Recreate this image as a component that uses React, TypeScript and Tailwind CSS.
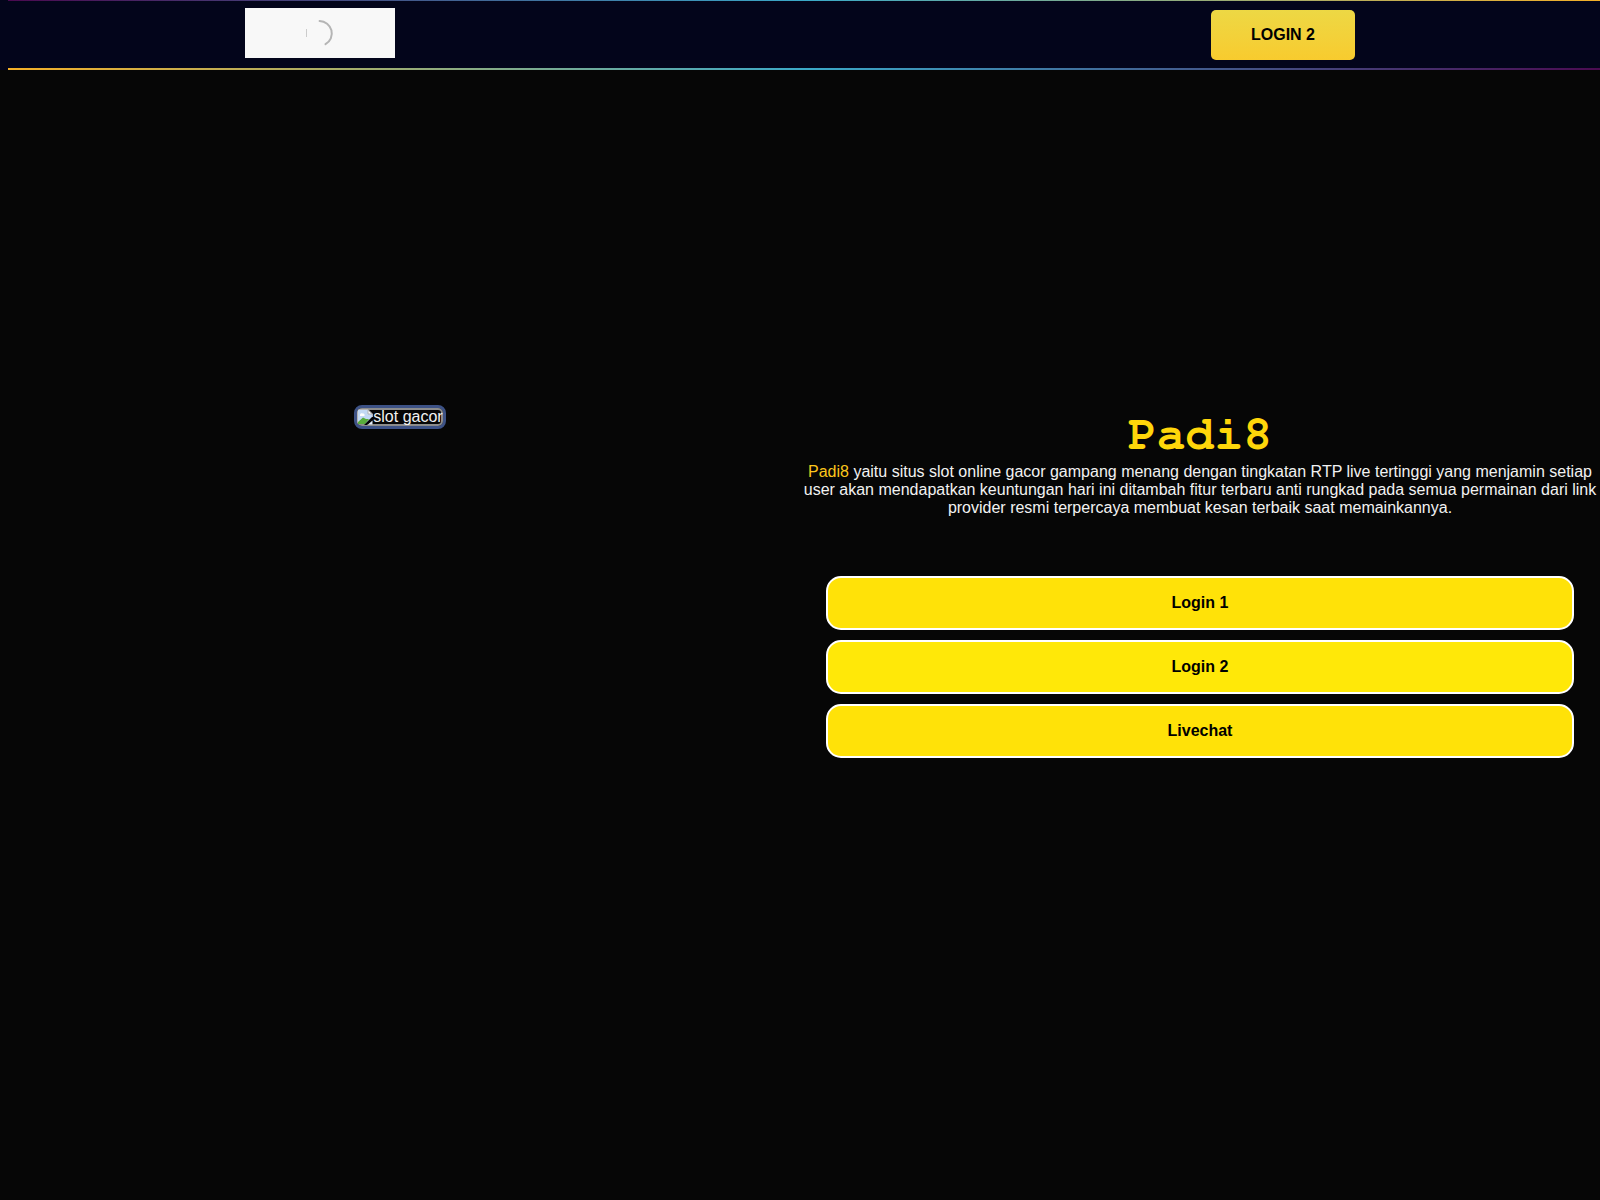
import React from 'react';

const links = [
  { label: 'Login 1', className: 'bg-[#ffe208]' },
  { label: 'Login 2', className: 'bg-[#ffe808]' },
  { label: 'Livechat', className: 'bg-[#ffe208]' },
];

const LogoLoader: React.FC = () => (
  <a href="#" aria-label="Padi8" className="block bg-[#f8f8f8]">
    <svg width="150" height="50" viewBox="0 0 150 50" fill="none">
      <path d="M74.6 13A12.4 12.4 0 0 1 80.5 36.2" stroke="#b5b5b5" strokeWidth="2" strokeLinecap="round" />
      <path d="M61.5 21V29" stroke="#cccccc" strokeWidth="1" />
    </svg>
  </a>
);

const BrokenImageIcon: React.FC = () => (
  <svg width="16" height="16" viewBox="0 0 16 16" className="shrink-0">
    <path d="M1 1H11L15 5V8L8 15H1Z" fill="#c3d9f5" />
    <path d="M1 15V13L6 8.5L9 10L12 10L8 15Z" fill="#58ad3c" />
    <path d="M3 6C3 4 5 4 5.5 4.5C8 4 8 7 7 7H3Z" fill="#ffffff" />
    <path d="M.5 15V.5H11L15.5 5V8" fill="none" stroke="#b4b4b4" />
    <path d="M11 1V5H15Z" fill="#ffffff" stroke="#b4b4b4" />
    <path d="M7 16L16 8V10L10 16Z" fill="#050505" />
    <path d="M11 15.5H15.5V11.5Z" fill="#e6eefa" />
  </svg>
);

const App: React.FC = () => {
  return (
    <div className="min-h-screen overflow-x-hidden bg-[#060606] font-['Liberation_Sans',Arial,sans-serif] text-base leading-[18px] text-[#f2f2f2]">
      <header className="bg-[#03051b]">
        <div className="ml-2 -mr-2 h-px bg-linear-to-r/srgb from-[#4b0a50] via-[#3ba9c8] to-[#f5b027]"></div>
        <div className="mx-auto flex h-[67px] max-w-[1110px] items-start justify-between pt-[7px]">
          <LogoLoader />
          <a
            href="#"
            className="mt-[2px] flex h-[50px] items-center rounded-[5px] bg-linear-to-b from-[#edd844] to-[#f8cb2e] px-10 font-bold text-black"
          >
            LOGIN 2
          </a>
        </div>
        <div className="ml-2 -mr-2 h-[2px] bg-linear-to-r/srgb from-[#f5b027] via-[#3ba9c8] to-[#4b0a50]"></div>
      </header>

      <main className="grid grid-cols-2 pt-[335px]">
        <div className="flex items-start justify-center">
          {/* Banner */}
          <div className="flex rounded-lg border-[3px] border-[#3d5286] bg-[#3d5286]">
            <div
              role="img"
              aria-label="slot gacor"
              className="flex items-center overflow-hidden rounded-[5px] bg-[#060606] shadow-[inset_0_0_0_2px_#8c8c8c]"
            >
              <BrokenImageIcon />
              <span>slot gacor</span>
            </div>
          </div>
        </div>

        <div className="pt-1 text-center">
          <h1 className="mb-[2px] font-[FreeMono,'Nimbus_Mono_PS','Liberation_Mono',monospace] text-5xl leading-[52px] font-bold text-[#ffd60a]">
            Padi8
          </h1>
          <p>
            <a href="#" className="text-[#fcc61c]">Padi8</a> yaitu situs slot online gacor gampang menang dengan
            tingkatan RTP live tertinggi yang menjamin setiap user akan mendapatkan keuntungan hari ini ditambah fitur
            terbaru anti rungkad pada semua permainan dari link provider resmi terpercaya membuat kesan terbaik saat
            memainkannya.
          </p>

          {/* Links */}
          <div className="mx-[26px] mt-[59px] flex flex-col gap-[10px]">
            {links.map((link) => (
              <a
                key={link.label}
                href="#"
                className={`rounded-[15px] border-2 border-white py-4 font-bold text-black ${link.className}`}
              >
                {link.label}
              </a>
            ))}
          </div>
        </div>
      </main>
    </div>
  );
};

export default App;
